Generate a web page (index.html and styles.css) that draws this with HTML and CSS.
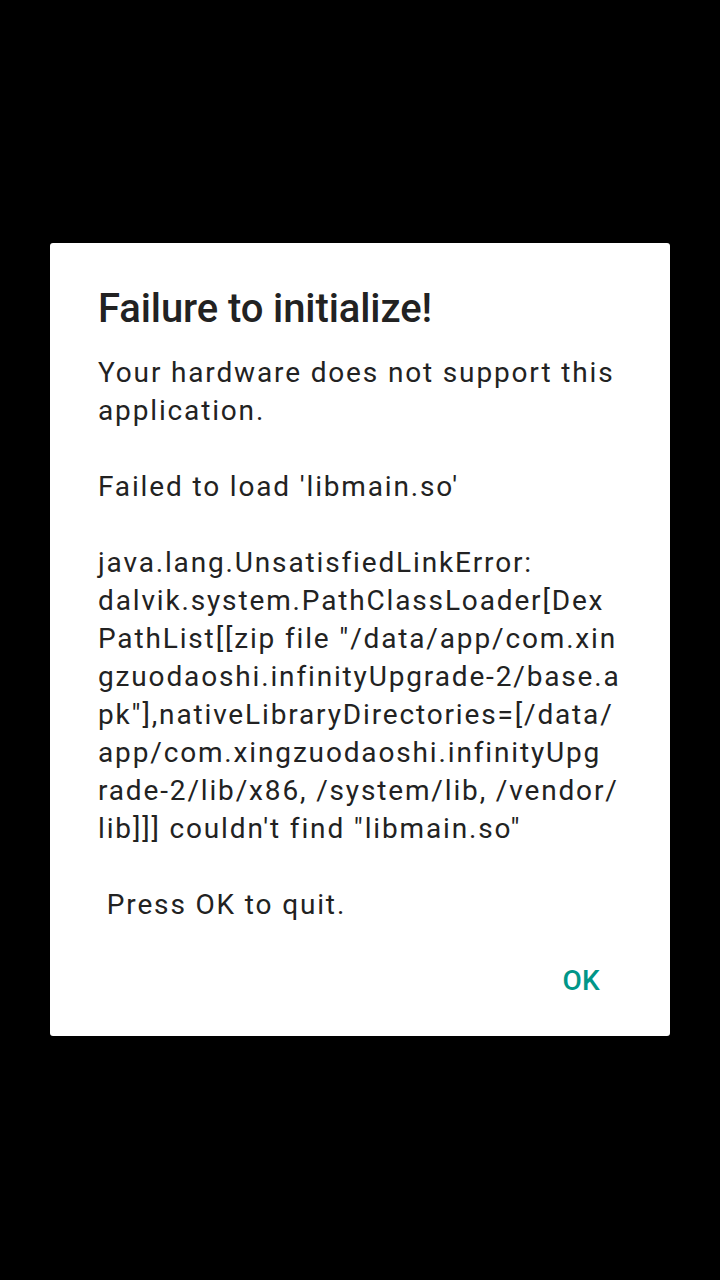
FILE: index.html
```html
<!DOCTYPE html>
<html>
<head>
<meta charset="utf-8">
<link rel="stylesheet" href="styles.css">
</head>
<body>
<div class="dialog">
  <div class="title">Failure to initialize!</div>
  <div class="message"><div class="line">Your hardware does not support this</div><div class="line">application.</div><div class="line"> </div><div class="line">Failed to load 'libmain.so'</div><div class="line"> </div><div class="line">java.lang.UnsatisfiedLinkError:</div><div class="line">dalvik.system.PathClassLoader[Dex</div><div class="line">PathList[[zip file "/data/app/com.xin</div><div class="line">gzuodaoshi.infinityUpgrade-2/base.a</div><div class="line">pk"],nativeLibraryDirectories=[/data/</div><div class="line">app/com.xingzuodaoshi.infinityUpg</div><div class="line">rade-2/lib/x86, /system/lib, /vendor/</div><div class="line">lib]]] couldn't find "libmain.so"</div><div class="line"> </div><div class="line"> Press OK to quit.</div></div>
  <div class="actions"><span class="btn">OK</span></div>
</div>
</body>
</html>
```
FILE: styles.css
```css
html, body {
  margin: 0;
  padding: 0;
  background: #000;
  width: 720px;
  height: 1280px;
  overflow: hidden;
}
body {
  font-family: Roboto, "Noto Sans", sans-serif;
  padding-top: 243px;
  box-sizing: border-box;
}
.dialog {
  margin-left: 50px;
  width: 620px;
  height: 793px;
  background: #fff;
  border-radius: 3px;
  box-sizing: border-box;
  padding: 42px 48px 0 48px;
  display: flex;
  flex-direction: column;
}
.title {
  font-size: 40px;
  font-weight: 500;
  line-height: 48px;
  letter-spacing: -0.1px;
  color: #222;
  margin-bottom: 21px;
}
.message {
  font-size: 28px;
  line-height: 38px;
  letter-spacing: 1.85px;
  color: #222;
}
.line {
  white-space: pre;
  height: 38px;
}
.actions {
  display: flex;
  justify-content: flex-end;
  margin-top: 39px;
  padding-right: 22px;
}
.btn {
  font-size: 28px;
  font-weight: 500;
  line-height: 36px;
  letter-spacing: 0.3px;
  color: #009688;
}
```
